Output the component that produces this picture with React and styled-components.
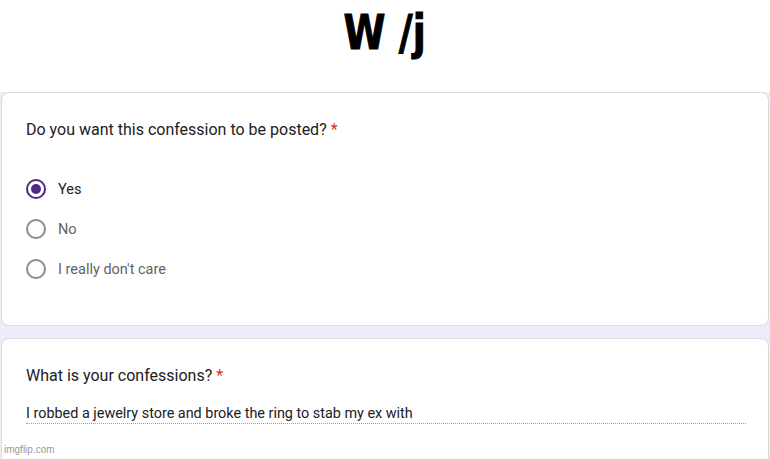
import React from 'react';
import styled, { createGlobalStyle } from 'styled-components';

const GlobalStyle = createGlobalStyle`
  html, body {
    margin: 0;
    padding: 0;
    background: #f0ebf8;
    font-family: Roboto, "Noto Sans", Arial, sans-serif;
  }
`;

const Page = styled.div`
  position: relative;
  width: 770px;
  height: 459px;
  overflow: hidden;
  background: #f0ebf8;
`;

const Header = styled.div`
  height: 92px;
  background: #ffffff;
  display: flex;
  justify-content: center;
  padding-top: 4px;
  box-sizing: border-box;
`;

const Title = styled.h1`
  margin: 0;
  font-family: "DejaVu Sans Condensed", "DejaVu Sans", sans-serif;
  font-weight: 900;
  font-size: 48px;
  line-height: 56px;
  color: #000;
  transform: scaleX(0.88);
  -webkit-text-stroke: 1px #000;
`;

const Card = styled.div`
  background: #fff;
  border: 1px solid #dadce0;
  border-radius: 8px;
  margin: ${p => p.$first ? '0' : '12px'} 1px 0 1px;
  padding: 27px 24px 34px;
  box-sizing: border-box;
  height: ${p => p.$first ? '234px' : '160px'};
`;

const Question = styled.div`
  font-size: 16px;
  line-height: 20px;
  color: #202124;
`;

const Star = styled.span`
  color: #d93025;
  margin-left: 4px;
`;

const Options = styled.div`
  margin-top: 39px;
  display: flex;
  flex-direction: column;
  gap: 20px;
`;

const Option = styled.label`
  display: flex;
  align-items: center;
  gap: 12px;
  height: 20px;
  font-size: 14.5px;
  color: ${p => p.$checked ? '#202124' : '#5f6368'};
`;

const Radio = styled.span`
  width: 20px;
  height: 20px;
  border-radius: 50%;
  box-sizing: border-box;
  border: 2px solid ${p => p.$checked ? '#4d2a83' : '#8a8a8a'};
  display: flex;
  align-items: center;
  justify-content: center;
  &::after {
    content: '';
    display: ${p => p.$checked ? 'block' : 'none'};
    width: 10px;
    height: 10px;
    border-radius: 50%;
    background: #4d2a83;
  }
`;

const Answer = styled.div`
  margin-top: 20px;
  width: 720px;
  font-size: 14.4px;
  line-height: 16px;
  color: #202124;
  border-bottom: 1px dotted #9aa0a6;
  padding-bottom: 1px;
`;

const Watermark = styled.div`
  position: absolute;
  left: 4px;
  bottom: 4px;
  font-family: "Liberation Sans", Arial, sans-serif;
  font-size: 10px;
  color: #9a9a9a;
`;

const options = [
  { label: 'Yes', checked: true },
  { label: 'No', checked: false },
  { label: "I really don't care", checked: false },
];

export default function App() {
  return (
    <Page>
      <GlobalStyle />
      <Header>
        <Title>W /j</Title>
      </Header>
      <Card $first>
        <Question>Do you want this confession to be posted?<Star>*</Star></Question>
        <Options>
          {options.map(o => (
            <Option key={o.label} $checked={o.checked}>
              <Radio $checked={o.checked} />
              {o.label}
            </Option>
          ))}
        </Options>
      </Card>
      <Card>
        <Question>What is your confessions?<Star>*</Star></Question>
        <Answer>I robbed a jewelry store and broke the ring to stab my ex with</Answer>
      </Card>
      <Watermark>imgflip.com</Watermark>
    </Page>
  );
}
